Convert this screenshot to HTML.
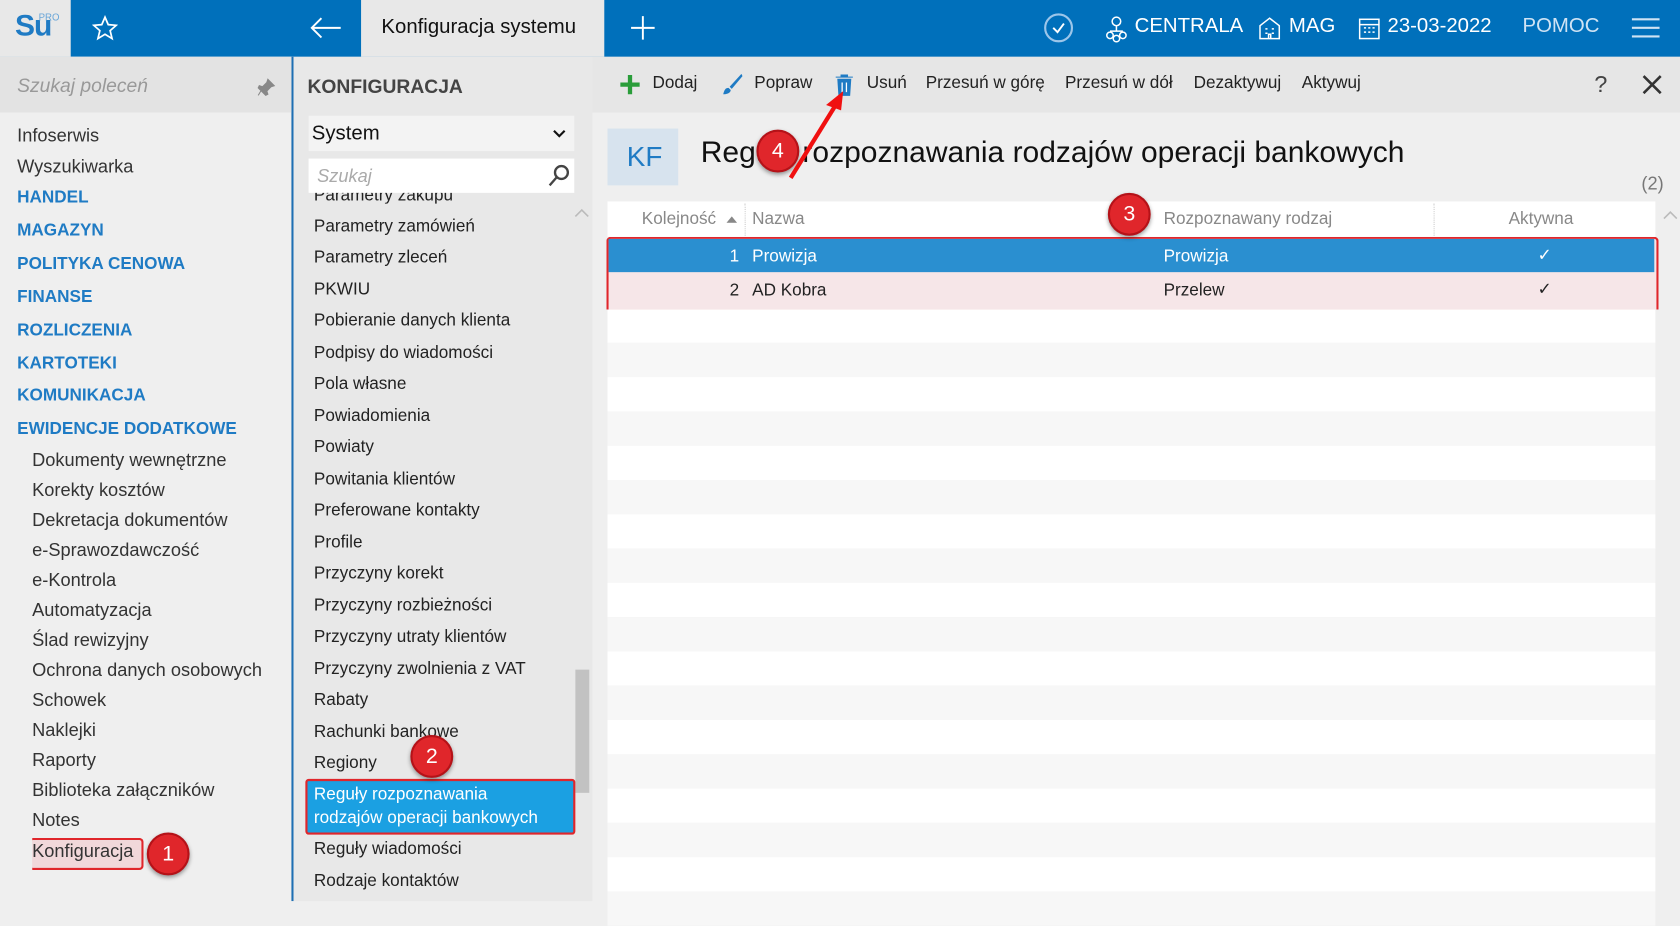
<!DOCTYPE html>
<html><head><meta charset="utf-8"><style>
html,body{margin:0;padding:0;width:1680px;height:901px;overflow:hidden;background:#efefef}
#w{position:absolute;left:0;top:0;width:1568px;height:841px;transform:scale(1.07143);transform-origin:0 0;font-family:"Liberation Sans",sans-serif;color:#222}
.a{position:absolute}
.hdr{left:0;top:0;width:1568px;height:53px;background:#0070bb}
.t{position:absolute;white-space:nowrap}
.side{left:0;top:53px;width:272px;height:788px;background:#efefef;border-right:2px solid #1e6fb3}
.mid{left:274px;top:53px;width:279px;height:788px;background:#e8e8e8}
.li{position:absolute;left:19px;font-size:16px;color:#222}
.sl{position:absolute;left:30px;font-size:17px;color:#333}
.bl{position:absolute;left:16px;font-size:16px;font-weight:bold;color:#1f7bc4}
.sd{position:absolute;left:16px;font-size:17px;color:#333}
.badge{position:absolute;width:36px;height:36px;border-radius:50%;background:#e0262b;border:2px solid #b51218;color:#fff;font-size:20px;text-align:center;line-height:36px;box-shadow:0 2px 4px rgba(0,0,0,.4)}
.tb{position:absolute;top:69px;font-size:16px;color:#222}
.stripe{position:absolute;left:567px;width:978px;height:32px}
</style></head><body><div id="w">
<div class="a hdr"></div>
<div class="a" style="left:0;top:0;width:66px;height:53px;background:#e8e8e8"></div>
<div class="t" style="left:14px;top:8px;font-size:28px;font-weight:bold;color:#1f7bc4;letter-spacing:-1px">Su</div>
<div class="t" style="left:36px;top:11px;font-size:9px;color:#6aa6d8">PRO</div>
<svg class="a" style="left:86px;top:14px" width="24" height="24" viewBox="0 0 24 24"><path d="M12 2l3 7 7.5.6-5.7 5 1.8 7.4L12 18l-6.6 4 1.8-7.4-5.7-5L9 9z" fill="none" stroke="#fff" stroke-width="1.6"/></svg>
<svg class="a" style="left:288px;top:14px" width="32" height="24" viewBox="0 0 32 24"><path d="M30 12H3M12 3L3 12l9 9" fill="none" stroke="#fff" stroke-width="1.8"/></svg>
<div class="a" style="left:337px;top:0;width:227px;height:53px;background:#e8e8e8"></div>
<div class="t" style="left:356px;top:15px;font-size:19px;color:#111">Konfiguracja systemu</div>
<svg class="a" style="left:588px;top:14px" width="24" height="24"><path d="M12 1v22M1 12h22" stroke="#fff" stroke-width="1.8"/></svg>
<svg class="a" style="left:973px;top:11px" width="30" height="30"><circle cx="15" cy="15" r="12.5" fill="none" stroke="#9cc6ea" stroke-width="2"/><path d="M10 15l4 4 6-8" fill="none" stroke="#fff" stroke-width="1.8"/></svg>
<svg class="a" style="left:1031px;top:14px" width="22" height="26" viewBox="0 0 22 26" fill="none" stroke="#fff" stroke-width="1.4"><circle cx="11" cy="6" r="4"/><path d="M11 10v5M5 15h12"/><circle cx="5" cy="19" r="3"/><circle cx="17" cy="19" r="3"/><circle cx="11" cy="22" r="3"/></svg>
<div class="t" style="left:1059px;top:14px;font-size:19px;color:#fff">CENTRALA</div>
<svg class="a" style="left:1174px;top:15px" width="22" height="22" fill="none" stroke="#fff" stroke-width="1.4"><path d="M2 21V9l9-7 9 7v12zM7 12h2M13 12h2M7 16h2M13 16h2M10 21v-4h2v4"/></svg>
<div class="t" style="left:1203px;top:14px;font-size:19px;color:#fff">MAG</div>
<svg class="a" style="left:1268px;top:15px" width="20" height="22" fill="none" stroke="#fff" stroke-width="1.4"><rect x="1" y="3" width="18" height="18"/><path d="M1 8h18M5 11h2M9 11h2M13 11h2M5 15h2M9 15h2M13 15h2"/></svg>
<div class="t" style="left:1295px;top:14px;font-size:19px;color:#fff">23-03-2022</div>
<div class="t" style="left:1421px;top:14px;font-size:19px;color:#cfe3f4">POMOC</div>
<svg class="a" style="left:1523px;top:16px" width="26" height="20"><path d="M0 2h26M0 10h26M0 18h26" stroke="#cfe3f4" stroke-width="2"/></svg>

<div class="a side"></div>
<div class="a" style="left:0;top:53px;width:272px;height:52px;background:#e3e3e3"></div>
<div class="t" style="left:16px;top:70px;font-size:18px;font-style:italic;color:#999">Szukaj poleceń</div>
<svg class="a" style="left:240px;top:72px" width="18" height="18"><path d="M10 2l6 6-3 1-4 4 1 3-2 1-7-7 1-2 3 1 4-4z M4 12l-3 5" fill="#888" stroke="#888" stroke-width="1"/></svg>
<div class="sd" style="top:117px">Infoserwis</div>
<div class="sd" style="top:146px">Wyszukiwarka</div>
<div class="bl" style="top:176px">HANDEL</div>
<div class="bl" style="top:207px">MAGAZYN</div>
<div class="bl" style="top:238px">POLITYKA CENOWA</div>
<div class="bl" style="top:269px">FINANSE</div>
<div class="bl" style="top:300px">ROZLICZENIA</div>
<div class="bl" style="top:331px">KARTOTEKI</div>
<div class="bl" style="top:361px">KOMUNIKACJA</div>
<div class="bl" style="top:392px">EWIDENCJE DODATKOWE</div>
<div class="sl" style="top:420px">Dokumenty wewnętrzne</div>
<div class="sl" style="top:448px">Korekty kosztów</div>
<div class="sl" style="top:476px">Dekretacja dokumentów</div>
<div class="sl" style="top:504px">e-Sprawozdawczość</div>
<div class="sl" style="top:532px">e-Kontrola</div>
<div class="sl" style="top:560px">Automatyzacja</div>
<div class="sl" style="top:588px">Ślad rewizyjny</div>
<div class="sl" style="top:616px">Ochrona danych osobowych</div>
<div class="sl" style="top:644px">Schowek</div>
<div class="sl" style="top:672px">Naklejki</div>
<div class="sl" style="top:700px">Raporty</div>
<div class="sl" style="top:728px">Biblioteka załączników</div>
<div class="sl" style="top:756px">Notes</div>
<div class="a" style="left:30px;top:782px;width:102px;height:26px;border:2px solid #e0262b;border-left:none;background:#f1d8da;border-radius:0 4px 4px 0"></div>
<div class="sl" style="top:785px">Konfiguracja</div>
<div class="badge" style="left:137px;top:777px">1</div>

<div class="a mid"></div>
<div class="t" style="left:287px;top:71px;font-size:18px;font-weight:bold;color:#444">KONFIGURACJA</div>
<div class="a" style="left:288px;top:108px;width:248px;height:33px;background:#f3f3f3"></div>
<div class="t" style="left:291px;top:114px;font-size:19px;color:#111">System</div>
<svg class="a" style="left:516px;top:120px" width="12" height="10"><path d="M1 2l5 5 5-5" fill="none" stroke="#111" stroke-width="2"/></svg>
<div class="a" style="left:288px;top:148px;width:248px;height:32px;background:#fff"></div>
<div class="t" style="left:296px;top:155px;font-size:17px;font-style:italic;color:#aaa">Szukaj</div>
<svg class="a" style="left:510px;top:152px" width="24" height="24" fill="none" stroke="#444" stroke-width="2.2"><circle cx="14" cy="9" r="6"/><path d="M10 13l-7 8"/></svg>
<div class="a" style="left:274px;top:180px;width:262px;height:10px;overflow:hidden"><div class="li" style="top:-6px">Parametry zakupu</div></div>
<div class="li" style="left:293px;top:203px">Parametry zamówień</div>
<div class="li" style="left:293px;top:232px">Parametry zleceń</div>
<div class="li" style="left:293px;top:262px">PKWIU</div>
<div class="li" style="left:293px;top:291px">Pobieranie danych klienta</div>
<div class="li" style="left:293px;top:321px">Podpisy do wiadomości</div>
<div class="li" style="left:293px;top:350px">Pola własne</div>
<div class="li" style="left:293px;top:380px">Powiadomienia</div>
<div class="li" style="left:293px;top:409px">Powiaty</div>
<div class="li" style="left:293px;top:439px">Powitania klientów</div>
<div class="li" style="left:293px;top:468px">Preferowane kontakty</div>
<div class="li" style="left:293px;top:498px">Profile</div>
<div class="li" style="left:293px;top:527px">Przyczyny korekt</div>
<div class="li" style="left:293px;top:557px">Przyczyny rozbieżności</div>
<div class="li" style="left:293px;top:586px">Przyczyny utraty klientów</div>
<div class="li" style="left:293px;top:616px">Przyczyny zwolnienia z VAT</div>
<div class="li" style="left:293px;top:645px">Rabaty</div>
<div class="li" style="left:293px;top:675px">Rachunki bankowe</div>
<div class="li" style="left:293px;top:704px">Regiony</div>
<svg class="a" style="left:536px;top:194px" width="14" height="10"><path d="M1 8l6-6 6 6" fill="none" stroke="#bbb" stroke-width="1.5"/></svg>
<div class="a" style="left:537px;top:625px;width:13px;height:115px;background:#c2c2c2"></div>
<div class="a" style="left:285px;top:727px;width:248px;height:48px;background:#1ba0e2;border:2px solid #e0262b;border-radius:3px"></div>
<div class="li" style="left:293px;top:733px;color:#fff">Reguły rozpoznawania</div>
<div class="li" style="left:293px;top:755px;color:#fff">rodzajów operacji bankowych</div>
<div class="badge" style="left:383px;top:686px">2</div>
<div class="li" style="left:293px;top:784px">Reguły wiadomości</div>
<div class="li" style="left:293px;top:814px">Rodzaje kontaktów</div>

<div class="a" style="left:553px;top:53px;width:1015px;height:52px;background:#e6e6e6"></div>
<svg class="a" style="left:578px;top:69px" width="20" height="20"><path d="M10 1v18M1 10h18" stroke="#2a9d3a" stroke-width="4"/></svg>
<div class="tb" style="left:609px">Dodaj</div>
<svg class="a" style="left:672px;top:68px" width="22" height="22"><path d="M20 1L9 13l2 2L21 3z" fill="#1f7bc4"/><path d="M8 14c-3 0-4 2-5 6 3 0 7-1 7-4z" fill="#1f7bc4"/></svg>
<div class="tb" style="left:704px">Popraw</div>
<svg class="a" style="left:779px;top:68px" width="18" height="22"><path d="M1 4h16M6 4V2h6v2M3 6h12l-1 15H4z" fill="#1f7bc4" stroke="#1f7bc4"/><path d="M7 9v9M11 9v9" stroke="#fff" stroke-width="1.2"/></svg>
<div class="tb" style="left:809px">Usuń</div>
<div class="tb" style="left:864px">Przesuń w górę</div>
<div class="tb" style="left:994px">Przesuń w dół</div>
<div class="tb" style="left:1114px">Dezaktywuj</div>
<div class="tb" style="left:1215px">Aktywuj</div>
<div class="t" style="left:1488px;top:66px;font-size:22px;color:#444">?</div>
<svg class="a" style="left:1533px;top:70px" width="18" height="18"><path d="M1 1l16 16M17 1L1 17" stroke="#333" stroke-width="2.4"/></svg>

<div class="a" style="left:567px;top:120px;width:66px;height:53px;background:#d7e3ee"></div>
<div class="t" style="left:585px;top:131px;font-size:26px;color:#1f7bc4">KF</div>
<div class="t" style="left:654px;top:126px;font-size:28px;color:#111">Reguły rozpoznawania rodzajów operacji bankowych</div>
<div class="t" style="left:1532px;top:162px;font-size:17px;color:#777">(2)</div>

<div class="a" style="left:567px;top:188px;width:978px;height:33px;background:#fff"></div>
<div class="t" style="left:599px;top:196px;font-size:16px;color:#888">Kolejność</div>
<svg class="a" style="left:678px;top:201px" width="10" height="7"><path d="M0 7L5 1l5 6z" fill="#888"/></svg>
<div class="a" style="left:695px;top:190px;height:30px;border-left:1px dotted #ccc"></div>
<div class="t" style="left:702px;top:196px;font-size:16px;color:#888">Nazwa</div>
<div class="t" style="left:1086px;top:196px;font-size:16px;color:#888">Rozpoznawany rodzaj</div>
<div class="a" style="left:1338px;top:190px;height:30px;border-left:1px dotted #ccc"></div>
<div class="t" style="left:1408px;top:196px;font-size:16px;color:#888">Aktywna</div>
<svg class="a" style="left:1552px;top:196px" width="14" height="10"><path d="M1 8l6-6 6 6" fill="none" stroke="#bbb" stroke-width="1.5"/></svg>

<div class="stripe" style="top:288px;background:#fff"></div>
<div class="stripe" style="top:320px;background:#f7f7f7"></div>
<div class="stripe" style="top:352px;background:#fff"></div>
<div class="stripe" style="top:384px;background:#f7f7f7"></div>
<div class="stripe" style="top:416px;background:#fff"></div>
<div class="stripe" style="top:448px;background:#f7f7f7"></div>
<div class="stripe" style="top:480px;background:#fff"></div>
<div class="stripe" style="top:512px;background:#f7f7f7"></div>
<div class="stripe" style="top:544px;background:#fff"></div>
<div class="stripe" style="top:576px;background:#f7f7f7"></div>
<div class="stripe" style="top:608px;background:#fff"></div>
<div class="stripe" style="top:640px;background:#f7f7f7"></div>
<div class="stripe" style="top:672px;background:#fff"></div>
<div class="stripe" style="top:704px;background:#f7f7f7"></div>
<div class="stripe" style="top:736px;background:#fff"></div>
<div class="stripe" style="top:768px;background:#f7f7f7"></div>
<div class="stripe" style="top:800px;background:#fff"></div>
<div class="stripe" style="top:832px;background:#f7f7f7"></div>

<div class="a" style="left:566px;top:221px;width:978px;height:66px;border:2px solid #e0262b;border-bottom:none;border-radius:4px 4px 0 0;background:#f6e6e8"></div>
<div class="a" style="left:568px;top:223px;width:976px;height:31px;background:#2a8fd0"></div>
<div class="t" style="left:681px;top:231px;font-size:16px;color:#fff">1</div>
<div class="t" style="left:702px;top:231px;font-size:16px;color:#fff">Prowizja</div>
<div class="t" style="left:1086px;top:231px;font-size:16px;color:#fff">Prowizja</div>
<div class="t" style="left:1435px;top:228px;font-size:16px;color:#fff">✓</div>
<div class="t" style="left:681px;top:263px;font-size:16px;color:#222">2</div>
<div class="t" style="left:702px;top:263px;font-size:16px;color:#222">AD Kobra</div>
<div class="t" style="left:1086px;top:263px;font-size:16px;color:#222">Przelew</div>
<div class="t" style="left:1435px;top:260px;font-size:16px;color:#222">✓</div>
<div class="badge" style="left:1034px;top:180px">3</div>
<div class="badge" style="left:706px;top:121px">4</div>
<svg class="a" style="left:730px;top:80px" width="60" height="90"><path d="M8 86L50 18" stroke="#f01010" stroke-width="4"/><path d="M57 5l-16 13 14 5z" fill="#f01010"/></svg>
</div></body></html>
